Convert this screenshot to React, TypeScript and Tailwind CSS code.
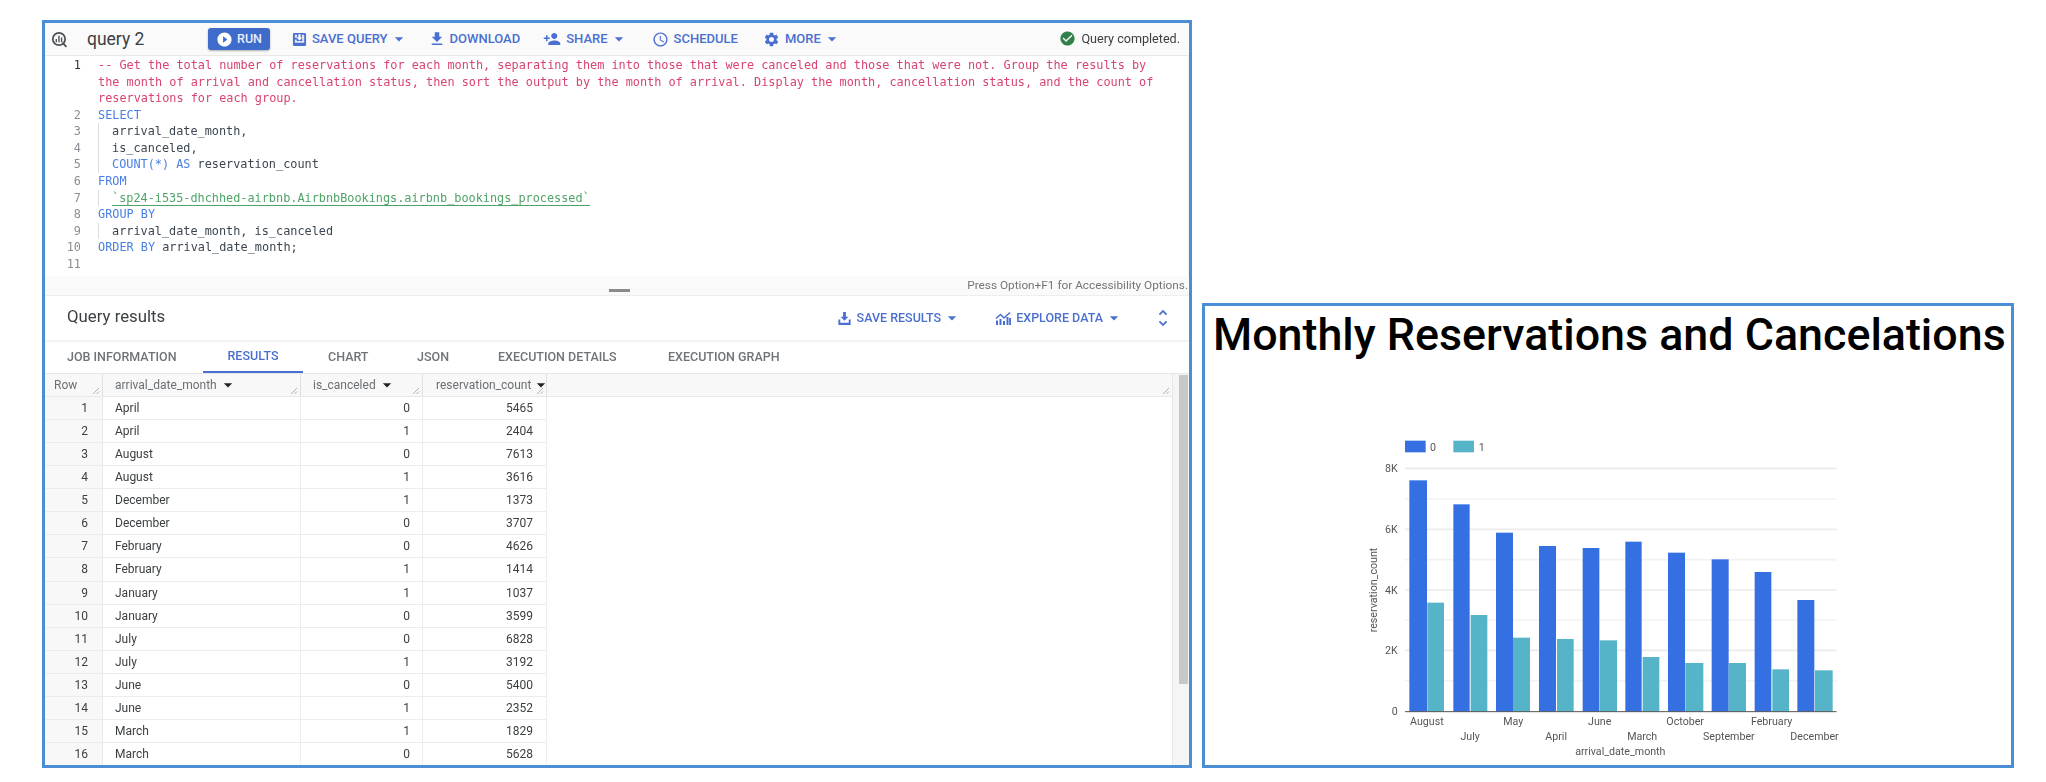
import React from "react";
import {
  MdAccessTime,
  MdArrowDropDown,
  MdCheckCircle,
  MdFileDownload,
  MdPersonAdd,
  MdPlayCircleFilled,
  MdSettings,
  MdUnfoldMore,
} from "react-icons/md";

const rows: [number, string, number, number][] = [
  [1, "April", 0, 5465],
  [2, "April", 1, 2404],
  [3, "August", 0, 7613],
  [4, "August", 1, 3616],
  [5, "December", 1, 1373],
  [6, "December", 0, 3707],
  [7, "February", 0, 4626],
  [8, "February", 1, 1414],
  [9, "January", 1, 1037],
  [10, "January", 0, 3599],
  [11, "July", 0, 6828],
  [12, "July", 1, 3192],
  [13, "June", 0, 5400],
  [14, "June", 1, 2352],
  [15, "March", 1, 1829],
  [16, "March", 0, 5628],
];

const bars: [string, number, number, number, number, number, number][] = [
  ["August", 208, 261, 181, 262, 312, 548],
  ["July", 340, 389, 253, 392, 442, 585],
  ["May", 468, 519, 338, 519, 570, 653],
  ["April", 597, 648, 378, 651, 701, 657],
  ["June", 728, 778, 384, 779, 831, 661],
  ["March", 856, 905, 365, 908, 958, 711],
  ["October", 984, 1035, 398, 1036, 1090, 729],
  ["September", 1115, 1166, 418, 1166, 1218, 729],
  ["February", 1244, 1294, 456, 1297, 1347, 748],
  ["December", 1372, 1423, 540, 1425, 1478, 751],
];

function SaveBoxIcon() {
  return (
    <svg width="15" height="15" viewBox="0 0 16 16" className="shrink-0">
      <path d="M2.5 1h11A1.5 1.5 0 0 1 15 2.500v11a1.500 1.500 0 0 1-1.500 1.500h-11A1.500 1.500 0 0 1 1 13.500v-11A1.500 1.500 0 0 1 2.500 1z" fill="#4a6fd0" />
      <path d="M3 3h2.500v3H3zM10.500 3H13v8.500H3V8h2v1.500h6z" fill="#dfe6f7" />
      <path d="M6.800 2.500h2.400v3.300h2L8 9 4.800 5.800h2z" fill="#fff" />
    </svg>
  );
}

function TrayDownIcon() {
  return (
    <svg width="15" height="15" viewBox="0 0 16 16" className="shrink-0">
      <path d="M6.500 1h3v5h2.700L8 10.300 3.800 6h2.700z" fill="#4a6fd0" />
      <path d="M1.500 9h2v3.500h9V9h2v6h-13z" fill="#4a6fd0" />
    </svg>
  );
}

function ExploreIcon() {
  return (
    <svg width="16" height="15" viewBox="0 0 16 15" className="shrink-0">
      <path d="M1 14V9.500h2V14zM4.500 14V8h2v6zM8 14v-4h2v4zM11.500 14V6h2v8zM14.200 14V7H16v7z" fill="#4a6fd0" />
      <path d="M1 7.500 5.500 3.500 9 7l6-5.500" fill="none" stroke="#4a6fd0" strokeWidth="1.500" />
    </svg>
  );
}

function ToolbarAction({ icon, label, caret, className }: { icon: React.ReactNode; label: string; caret?: boolean; className: string }) {
  return (
    <div className={`flex items-center font-medium text-[#4a6fd0] ${className}`}>
      {icon}
      <span className="ml-[5px] whitespace-nowrap">{label}</span>
      {caret && <MdArrowDropDown className="ml-[1px] text-[#4a6fd0]" size={20} />}
    </div>
  );
}

function Grip() {
  return (
    <svg width="8" height="8" viewBox="0 0 8 8" className="absolute bottom-[1px] right-[2px]">
      <path d="M1 7 7 1M4.500 7 7 4.500" stroke="#9e9e9e" strokeWidth="0.800" fill="none" />
    </svg>
  );
}

function Line({ n, children, guide }: { n?: number; children?: React.ReactNode; guide?: boolean }) {
  return (
    <div className="flex h-[16.580px] items-center leading-[16.580px]">
      <div className={`w-[36px] shrink-0 text-right ${n === 1 ? "text-[#333]" : "text-[#8a8f94]"}`}>{n}</div>
      <div className="w-[17px] shrink-0" />
      <div className={`whitespace-pre pl-0 ${guide ? "border-l border-[#dadce0] pl-[13px]" : ""}`}>{children}</div>
    </div>
  );
}

const K = ({ children }: { children: React.ReactNode }) => <span className="text-[#4a7fe3]">{children}</span>;
const C = ({ children }: { children: React.ReactNode }) => <span className="text-[#d8446f]">{children}</span>;

function Editor() {
  return (
    <div className="h-[220px] border-r border-[#f1f1f1] bg-white pt-[1px] font-['DejaVu_Sans_Mono',monospace] text-[11.850px] text-[#3c4650]">
      <Line n={1}><C>-- Get the total number of reservations for each month, separating them into those that were canceled and those that were not. Group the results by</C></Line>
      <Line><C>the month of arrival and cancellation status, then sort the output by the month of arrival. Display the month, cancellation status, and the count of</C></Line>
      <Line><C>reservations for each group.</C></Line>
      <Line n={2}><K>SELECT</K></Line>
      <Line n={3} guide>arrival_date_month,</Line>
      <Line n={4} guide>is_canceled,</Line>
      <Line n={5} guide><K>COUNT(*) AS</K> reservation_count</Line>
      <Line n={6}><K>FROM</K></Line>
      <Line n={7} guide><span className="border-b border-[#4fa368] text-[#4fa368]">`sp24-i535-dhchhed-airbnb.AirbnbBookings.airbnb_bookings_processed`</span></Line>
      <Line n={8}><K>GROUP BY</K></Line>
      <Line n={9} guide>arrival_date_month, is_canceled</Line>
      <Line n={10}><K>ORDER BY</K> arrival_date_month;</Line>
      <Line n={11} />
    </div>
  );
}

function Toolbar() {
  return (
    <div className="flex h-[33px] items-center border-b border-[#e8e8e8] bg-[#fafafa]">
      <svg width="17" height="17" viewBox="0 0 16 16" className="ml-[6px] shrink-0">
        <circle cx="7.500" cy="7.500" r="5.800" fill="none" stroke="#4d5358" strokeWidth="1.700" />
        <path d="M10.800 11 14.500 15" stroke="#4d5358" strokeWidth="1.800" />
        <path d="M7.500 4.500v6M5 7.500v3M10 6v4.500" stroke="#4d5358" strokeWidth="1.300" />
      </svg>
      <div className="ml-[19px] w-[121px] whitespace-nowrap text-[17.500px] text-[#3c4043]">query 2</div>
      <div className="flex h-[22px] w-[62px] items-center justify-center rounded-[3px] bg-[#3f6bcb] text-[12.500px] font-medium text-[#e8eefb] shadow-[0_1px_2px_rgba(60,64,67,0.4)]">
        <MdPlayCircleFilled size={17} className="text-white" />
        <span className="ml-[4px]">RUN</span>
      </div>
      <ToolbarAction className="ml-[22px] text-[13px]" icon={<SaveBoxIcon />} label="SAVE QUERY" caret />
      <ToolbarAction className="ml-[20px] text-[13px]" icon={<MdFileDownload size={18} className="-mx-[1px]" />} label="DOWNLOAD" />
      <ToolbarAction className="ml-[23px] text-[13px]" icon={<MdPersonAdd size={18} />} label="SHARE" caret />
      <ToolbarAction className="ml-[23px] text-[13px]" icon={<MdAccessTime size={17} />} label="SCHEDULE" />
      <ToolbarAction className="ml-[25px] text-[13px]" icon={<MdSettings size={17} />} label="MORE" caret />
      <div className="ml-auto mr-[9px] flex items-center text-[12.600px] text-[#3c4043]">
        <MdCheckCircle size={17} className="text-[#2f8049]" />
        <span className="ml-[5px] whitespace-nowrap">Query completed.</span>
      </div>
    </div>
  );
}

function ResultsHeader() {
  return (
    <div className="flex h-[45px] items-center border-t border-[#eeeeee] pl-[22px]">
      <div className="pb-[2px] text-[16.800px] text-[#3c4043]">Query results</div>
      <div className="ml-auto mr-[15px] flex items-center">
        <ToolbarAction className="text-[12.500px]" icon={<TrayDownIcon />} label="SAVE RESULTS" caret />
        <ToolbarAction className="ml-[33px] text-[12.500px]" icon={<ExploreIcon />} label="EXPLORE DATA" caret />
        <MdUnfoldMore size={22} className="ml-[28px] text-[#4a6fd0]" />
      </div>
    </div>
  );
}

function Tabs() {
  const tabs: [string, string][] = [
    ["JOB INFORMATION", "ml-[22px] w-[136px]"],
    ["RESULTS", "w-[100px] justify-center text-[#4a6fd0] border-b-2 border-[#4a6fd0]"],
    ["CHART", "ml-[25px] w-[89px]"],
    ["JSON", "w-[81px]"],
    ["EXECUTION DETAILS", "w-[170px]"],
    ["EXECUTION GRAPH", ""],
  ];
  return (
    <div className="flex h-[34px] border-t-2 border-[#f1f3f4] border-b border-b-[#e8e8e8] text-[12.500px] font-medium text-[#6f7479]">
      {tabs.map(([t, c]) => (
        <div key={t} className={`flex items-center whitespace-nowrap ${c}`}>{t}</div>
      ))}
    </div>
  );
}

function HeaderCell({ label, width, pad }: { label: string; width: string; pad: string }) {
  return (
    <div className={`relative flex h-full items-center border-r border-[#e0e0e0] ${width} ${pad}`}>
      <span className="whitespace-nowrap">{label}</span>
      {label !== "Row" && <MdArrowDropDown size={20} className="ml-[1px] shrink-0 text-[#202124]" />}
      <Grip />
    </div>
  );
}

function Results() {
  return (
    <div className="flex min-h-0 flex-1">
      <div className="min-w-0 flex-1 text-[12px] text-[#3c4043]">
        <div className="relative flex h-[23px] border-b border-[#e8e8e8] bg-[#f8f8f8] text-[#6a6f74]">
          <HeaderCell label="Row" width="w-[58px]" pad="pl-[9px]" />
          <HeaderCell label="arrival_date_month" width="w-[198px]" pad="pl-[12px]" />
          <HeaderCell label="is_canceled" width="w-[122px]" pad="pl-[12px]" />
          <div className="relative flex h-full w-[124px] items-center overflow-hidden border-r border-[#e0e0e0] pl-[13px]">
            <span className="whitespace-nowrap">reservation_count</span>
            <MdArrowDropDown size={20} className="shrink-0 text-[#202124]" />
            <Grip />
          </div>
          <div className="flex-1" />
          <Grip />
        </div>
        {rows.map(([n, m, c, v]) => (
          <div key={n} className="flex h-[23.070px] w-[502px] items-center border-b border-[#ececec]">
            <div className="flex h-full w-[58px] items-center justify-end border-r border-[#e8e8e8] bg-[#f8f8f8] pr-[14px]">{n}</div>
            <div className="flex h-full w-[198px] items-center border-r border-[#eeeeee] pl-[12px]">{m}</div>
            <div className="flex h-full w-[122px] items-center justify-end border-r border-[#eeeeee] pr-[12px]">{c}</div>
            <div className="flex h-full w-[124px] items-center justify-end border-r border-[#eeeeee] pr-[13px]">{v}</div>
          </div>
        ))}
      </div>
      <div className="w-[17px] shrink-0 border-l border-[#e8e8e8] bg-[#f5f5f5] pl-[6px] pr-[1px] pt-[1px]">
        <div className="h-[309px] bg-[#c8c8c8]" />
      </div>
    </div>
  );
}

function Chart() {
  const grid = [145, 237, 328, 419, 510, 600, 691, 782];
  const ticks: [string, number][] = [["8K", 145], ["6K", 328], ["4K", 510], ["2K", 691], ["0", 875]];
  return (
    <svg width="520" height="345" viewBox="0 0 1560 1035" className="ml-[135px] blur-[0.4px]" fontFamily="Roboto, sans-serif">
      <rect x="195" y="62" width="62" height="35" fill="#3570e3" />
      <text x="270" y="92" fontSize="32" fill="#555">0</text>
      <rect x="340" y="62" width="62" height="35" fill="#56b4c9" />
      <text x="416" y="92" fontSize="32" fill="#555">1</text>
      {grid.map((y, i) => (
        <line key={y} x1="195" x2="1490" y1={y} y2={y} stroke={i % 2 === 0 ? "#ebebeb" : "#f2f2f2"} strokeWidth="5" />
      ))}
      {ticks.map(([t, y]) => (
        <text key={t} x="173" y={y + 11} fontSize="32" textAnchor="end" fill="#555">{t}</text>
      ))}
      {bars.map(([m, a, b, t, c, d, u]) => (
        <g key={m}>
          <rect x={a} y={t} width={b - a} height={875 - t} fill="#3570e3" />
          <rect x={c} y={u} width={d - c} height={875 - u} fill="#56b4c9" />
        </g>
      ))}
      <line x1="195" x2="1490" y1="875" y2="875" stroke="#555" strokeWidth="3" />
      {bars.map(([m, a, b], i) => (
        <text key={m} x={(a + b) / 2 + 26} y={i % 2 === 0 ? 916 : 959} fontSize="32" textAnchor="middle" fill="#555">{m}</text>
      ))}
      <text x="841" y="1005" fontSize="32" textAnchor="middle" fill="#555">arrival_date_month</text>
      <text transform="translate(110 510) rotate(-90)" fontSize="32" textAnchor="middle" fill="#555">reservation_count</text>
    </svg>
  );
}

export default function App() {
  return (
    <div className="flex h-[782px] w-[2046px] items-start overflow-hidden bg-white font-['Roboto',sans-serif]">
      <div className="ml-[42px] mt-[20px] h-[748px] w-[1150px] shrink-0 overflow-hidden border-[3px] border-[#4a8ed4]">
        <div className="flex h-full flex-col blur-[0.4px]">
          <Toolbar />
          <Editor />
          <div className="flex h-[19px] items-center bg-[#fafafa]">
            <div className="ml-[564px] mt-[9px] h-[3px] w-[21px] bg-[#8a8a8a]" />
            <div className="ml-auto whitespace-nowrap pr-[1px] text-[11.800px] text-[#757575]">Press Option+F1 for Accessibility Options.</div>
          </div>
          <ResultsHeader />
          <Tabs />
          <Results />
        </div>
      </div>
      <div className="ml-[10px] mt-[303px] h-[465px] w-[812px] shrink-0 overflow-hidden border-[3px] border-[#4a8ed4]">
        <div className="h-[114px] whitespace-nowrap pl-[8px] pt-[5px] text-[44.800px] font-medium leading-[48px] text-black">Monthly Reservations and Cancelations</div>
        <Chart />
      </div>
    </div>
  );
}
